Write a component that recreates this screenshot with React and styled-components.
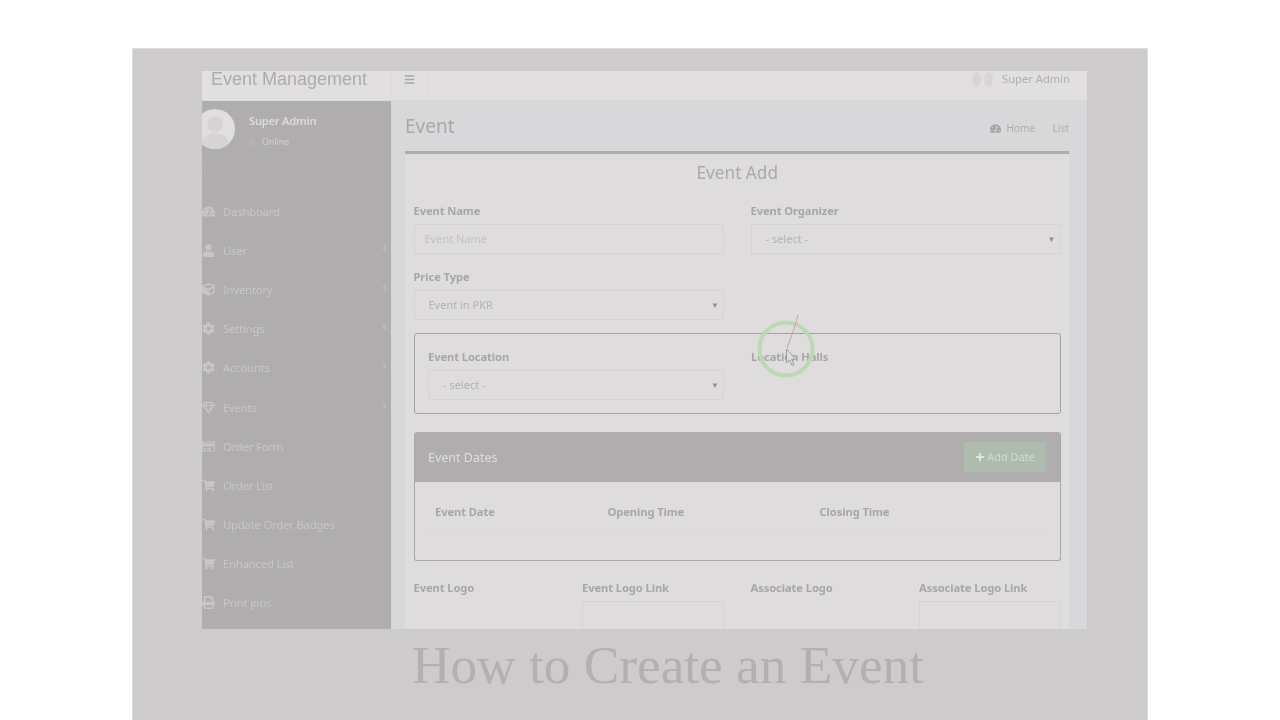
import React from "react";
import styled, { createGlobalStyle } from "styled-components";
import { FaTachometerAlt, FaUser, FaCube, FaCog, FaRegGem, FaRegCreditCard, FaShoppingCart, FaPrint, FaBars, FaPlus, FaAngleLeft, FaCircle } from "react-icons/fa";

const Global = createGlobalStyle`
  html, body { margin: 0; padding: 0; background: #fff; height: 720px; overflow: hidden; }
  * { box-sizing: border-box; }
`;
const sans = `"Noto Sans", "Open Sans", sans-serif`;

const Page = styled.div`
  width: 1280px; height: 720px; padding: 48px 132px 0; position: relative; overflow: hidden;
`;
const Slide = styled.div`
  width: 1016px; height: 672px; background: #cecbcc; border: 1px solid #dcdadb; border-bottom: 0;
  padding: 22px 60px 0 69px; display: flex; flex-direction: column;
`;
const Win = styled.div`
  width: 885px; height: 558px; flex: none; overflow: hidden; display: flex; flex-direction: column;
  background: #d8d8da; font-family: ${sans}; filter: blur(0.35px);
`;
const Nav = styled.header`
  height: 30px; flex: none; background: #e1dfe0; display: flex; color: #a6a4a6; border-bottom: 1px solid #dcdbdc;
`;
const Brand = styled.div`
  width: 189px; padding: 0 0 0 9px; font: 18px/16px "Liberation Sans", sans-serif; color: #adabad;
`;
const Burger = styled.div`
  width: 38px; height: 100%; border-left: 1px solid #dddbdc; border-right: 1px solid #dddbdc;
  display: flex; justify-content: center; padding: 3px 2px 0 0; font-size: 11px; color: #a8a6a8;
`;
const NavRight = styled.div`
  margin-left: auto; width: 130px; border-left: 1px solid #dddbdc; display: flex; gap: 9px;
  padding-left: 14px; font-size: 11.2px; line-height: 16px; color: #b0aeb0;
`;
const Heads = styled.div`
  display: flex; gap: 3px; padding-top: 1px;
  span { width: 9px; height: 15px; border-radius: 50%; background: #d7d5d6; display: block; }
`;
const Body = styled.div`
  flex: 1; min-height: 0; display: flex;
`;
const Side = styled.aside`
  width: 189px; flex: none; background: #b0adae; overflow: hidden; color: #cdcbcc; font-size: 11.4px; letter-spacing: -0.25px;
`;
const UserPanel = styled.div`
  height: 64px; padding: 8px 0 0 0; display: flex; margin-left: -7px;
`;
const Avatar = styled.div`
  width: 40px; height: 40px; border-radius: 50%; background: #e0dedf; flex: none; overflow: hidden;
  svg { display: block; }
`;
const UserText = styled.div`
  margin-left: 14px; padding-top: 4px;
`;
const UserName = styled.div`
  font-weight: 600; font-size: 11.2px; line-height: 16px; color: #dcdadb;
`;
const Online = styled.div`
  font-size: 8.8px; line-height: 12px; margin-top: 7px; color: #d2d0d1; display: flex; align-items: center; gap: 6px; letter-spacing: 0;
  svg { color: #b4b3b0; font-size: 7px; }
`;
const MenuHead = styled.div`
  font-size: 9px; line-height: 12px; height: 27px; color: #b4b1b2; padding-left: 1px;
`;
const Menu = styled.nav`
  display: flex; flex-direction: column;
`;
const Item = styled.a`
  height: 39.2px; display: flex; align-items: center; position: relative; color: #c8c6c7; padding-bottom: 1px;
`;
const ItemIcon = styled.span`
  width: 21px; flex: none; display: flex; font-size: 13px; color: #c7c5c6;
`;
const Chevron = styled(FaAngleLeft)`
  margin-left: auto; margin-right: 1px; font-size: 11px; color: #bcbabb; margin-top: -4px;
`;
const Main = styled.main`
  flex: 1; min-width: 0; padding: 0 18px 0 14px;
`;
const Title = styled.div`
  height: 50px; display: flex; justify-content: space-between; align-items: center;
`;
const H1 = styled.h1`
  margin: 0; font-weight: 400; font-size: 19px; color: #aaa8aa;
`;
const Crumbs = styled.div`
  display: flex; align-items: center; gap: 5px; font-size: 10px; color: #afadaf; padding-top: 4px;
  svg { font-size: 11px; color: #a6a4a6; margin-right: 1px; }
  i { font-style: normal; color: #d2d0d2; margin: 0 1px; }
`;
const Box = styled.section`
  border-top: 3px solid #aeabae; background: #dedcdd; padding: 0 8px 0 8.5px; height: 500px;
`;
const BoxTitle = styled.div`
  text-align: center; font-size: 17.2px; line-height: 22px; padding-top: 8px; height: 47px; color: #aaa8aa;
`;
const Grid = styled.div`
  display: grid; grid-template-columns: 310.5px 310px; column-gap: 26.5px;
`;
const Field = styled.div`
  height: 66px;
`;
const Label = styled.label`
  display: block; font-weight: 700; font-size: 11.2px; line-height: 16px; height: 16.5px; color: #a8a6a8; margin-top: 1.5px; letter-spacing: -0.1px;
`;
const Input = styled.div`
  height: 30px; border: 1px solid #d5d3d5; padding: 0 10px; font-size: 11px; line-height: 28px; color: #c3c1c3;
  margin-top: 5px; overflow: hidden;
`;
const Select = styled(Input)`
  display: flex; justify-content: space-between; padding: 0 4px 0 14px; color: #b3b1b3;
  b { font-weight: 400; font-size: 8px; color: #8f8d8f; }
`;
const LocBox = styled.div`
  height: 81px; border: 1px solid #a3a1a3; border-radius: 3px; padding: 13px 0 0 13.5px;
  display: grid; grid-template-columns: 296px 310px; column-gap: 27px;
`;
const Dates = styled.div`
  margin-top: 18px; height: 129px; border: 1px solid #a8a6a8; border-top: 0; border-radius: 3px; overflow: hidden;
`;
const DatesHead = styled.div`
  height: 50px; background: #b0adae; display: flex; align-items: center; justify-content: space-between; padding: 1px 14px 0 13.5px;
  color: #dedcdd; font-size: 12.5px;
`;
const AddBtn = styled.div`
  width: 82px; height: 30px; background: #adbcac; border-radius: 2px; display: flex; align-items: center; justify-content: center;
  gap: 2px; font-size: 11px; letter-spacing: -0.05px; color: #d0dcd0; margin-top: -2px;
  svg { font-size: 10px; color: #dfe6df; }
`;
const DatesTable = styled.div`
  margin: 19px 14px 0 13.5px; height: 28px; border-bottom: 1px solid #dad8da; display: grid; grid-template-columns: 172.5px 212px 1fr;
  padding-left: 7px; font-weight: 700; font-size: 11.2px; letter-spacing: -0.1px; line-height: 22px; color: #a8a6a8;
`;
const Logos = styled.div`
  margin-top: 17px; display: grid; grid-template-columns: repeat(4, 142px); column-gap: 26.5px;
`;
const LogoInput = styled.div`
  height: 40px; border: 1px solid #d5d3d5; margin-top: 5px;
`;
const Caption = styled.div`
  margin-top: 7px; text-align: center; font: 400 53.3px/60px "Liberation Serif", serif; color: #b3b0b1; padding-left: 47px; white-space: nowrap;
`;
const Pointer = styled.svg`
  position: absolute; left: 750px; top: 310px; pointer-events: none;
`;

const items = [
  ["Dashboard", FaTachometerAlt], ["User", FaUser, 1], ["Inventory", FaCube, 1], ["Settings", FaCog, 1],
  ["Accounts", FaCog, 1], ["Events", FaRegGem, 1], ["Order Form", FaRegCreditCard], ["Order List", FaShoppingCart],
  ["Update Order Badges", FaShoppingCart], ["Enhanced List", FaShoppingCart], ["Print jobs", FaPrint],
];

export default function App() {
  return (
    <Page>
      <Global />
      <Slide>
        <Win>
          <Nav>
            <Brand>Event Management</Brand>
            <Burger><FaBars /></Burger>
            <NavRight><Heads><span /><span /></Heads>Super Admin</NavRight>
          </Nav>
          <Body>
            <Side>
              <UserPanel>
                <Avatar>
                  <svg width="40" height="40" viewBox="0 0 40 40"><circle cx="20" cy="15" r="8" fill="#d6d4d5" /><ellipse cx="20" cy="33" rx="13" ry="9" fill="#d6d4d5" /></svg>
                </Avatar>
                <UserText>
                  <UserName>Super Admin</UserName>
                  <Online><FaCircle />Online</Online>
                </UserText>
              </UserPanel>
              <MenuHead>Main</MenuHead>
              <Menu>
                {items.map(([t, I, c]) => (
                  <Item key={t}><ItemIcon><I /></ItemIcon>{t}{c && <Chevron />}</Item>
                ))}
              </Menu>
            </Side>
            <Main>
              <Title>
                <H1>Event</H1>
                <Crumbs><FaTachometerAlt />Home<i>&gt;</i>List</Crumbs>
              </Title>
              <Box>
                <BoxTitle>Event Add</BoxTitle>
                <Grid>
                  <Field><Label>Event Name</Label><Input>Event Name</Input></Field>
                  <Field><Label>Event Organizer</Label><Select>- select -<b>▼</b></Select></Field>
                  <Field><Label>Price Type</Label><Select>Event in PKR<b>▼</b></Select></Field>
                </Grid>
                <LocBox>
                  <div><Label>Event Location</Label><Select>- select -<b>▼</b></Select></div>
                  <div><Label>Location Halls</Label></div>
                </LocBox>
                <Dates>
                  <DatesHead>Event Dates<AddBtn><FaPlus />Add Date</AddBtn></DatesHead>
                  <DatesTable><span>Event Date</span><span>Opening Time</span><span>Closing Time</span></DatesTable>
                </Dates>
                <Logos>
                  <div><Label>Event Logo</Label></div>
                  <div><Label>Event Logo Link</Label><LogoInput /></div>
                  <div><Label>Associate Logo</Label></div>
                  <div><Label>Associate Logo Link</Label><LogoInput /></div>
                </Logos>
              </Box>
            </Main>
          </Body>
        </Win>
        <Caption>How to Create an Event</Caption>
      </Slide>
      <Pointer width="70" height="80" viewBox="0 0 70 80" fill="none">
        <circle cx="36" cy="39" r="26.5" stroke="#bcd8b7" strokeWidth="4" />
        <path d="M48 5 C45 16 42 25 37 38" stroke="#d99a9c" strokeWidth="1" />
        <path d="M36.5 39 L36.5 53 L39.5 50 L42 55.5 L44 54.5 L41.5 49.5 L45.5 49 Z" fill="#dfdddf" stroke="#8f8d8f" strokeWidth="0.8" />
      </Pointer>
    </Page>
  );
}
